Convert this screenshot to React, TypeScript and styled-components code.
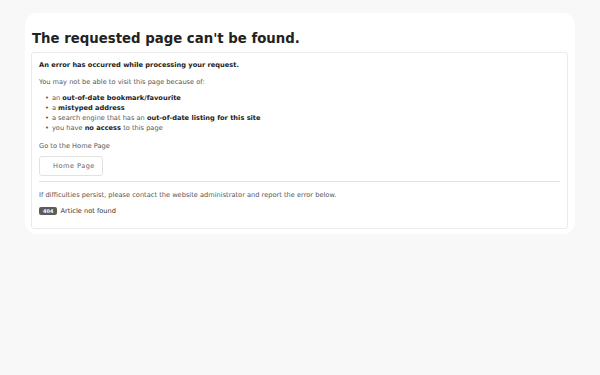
import styled, { createGlobalStyle } from 'styled-components';

const GlobalStyle = createGlobalStyle`
  html, body {
    margin: 0;
    padding: 0;
    background: #f8f8f8;
    font-family: 'DejaVu Sans', sans-serif;
  }
`;

const Page = styled.div`
  padding: 13px 25px;
`;

const Card = styled.main`
  background: #fff;
  border-radius: 12px;
  padding: 17px 7px 5px 6px;
`;

const Title = styled.h1`
  margin: 0 0 5px 1px;
  font-size: 13.3px;
  font-weight: bold;
  color: #222;
  line-height: 17px;
`;

const Box = styled.section`
  border: 1px solid #ebebeb;
  border-radius: 3px;
  padding: 7px 7px 12px;
  font-size: 6.65px;
  line-height: 10px;
  color: #555;
`;

const Lead = styled.p`
  margin: 0 0 7px;
  font-weight: bold;
  color: #222;
`;

const Para = styled.p<{ $gap?: number }>`
  margin: 0 0 ${(p) => p.$gap ?? 6}px;
`;

const List = styled.ul`
  margin: 0 0 8px;
  padding-left: 6px;
  list-style: none;
  li::before {
    content: '•';
    margin-right: 3px;
  }
  b {
    color: #222;
  }
`;

const Button = styled.a`
  display: inline-block;
  padding: 4px 7px 4px 13px;
  border: 1px solid #e2e2e2;
  border-radius: 3px;
  color: #666;
  text-decoration: none;
  letter-spacing: 0.45px;
  line-height: 10px;
`;

const Rule = styled.hr`
  border: 0;
  border-top: 1px solid #e2e2e2;
  margin: 5px 0 8px;
`;

const Badge = styled.span`
  display: inline-block;
  background: #5c5c5c;
  color: #fff;
  font-size: 5px;
  font-weight: bold;
  line-height: 8px;
  padding: 0 4px;
  border-radius: 2px;
  margin-right: 1px;
`;

const Error = styled.p`
  margin: 5px 0 0;
  color: #333;
`;

export default function App() {
  return (
    <>
      <GlobalStyle />
      <Page>
        <Card>
          <Title>The requested page can't be found.</Title>
          <Box>
            <Lead>An error has occurred while processing your request.</Lead>
            <Para>You may not be able to visit this page because of:</Para>
            <List>
              <li>an <b>out-of-date bookmark/favourite</b></li>
              <li>a <b>mistyped address</b></li>
              <li>a search engine that has an <b>out-of-date listing for this site</b></li>
              <li>you have <b>no access</b> to this page</li>
            </List>
            <Para $gap={5}>Go to the Home Page</Para>
            <Button href="#">Home Page</Button>
            <Rule />
            <Para>If difficulties persist, please contact the website administrator and report the error below.</Para>
            <Error>
              <Badge>404</Badge> Article not found
            </Error>
          </Box>
        </Card>
      </Page>
    </>
  );
}
